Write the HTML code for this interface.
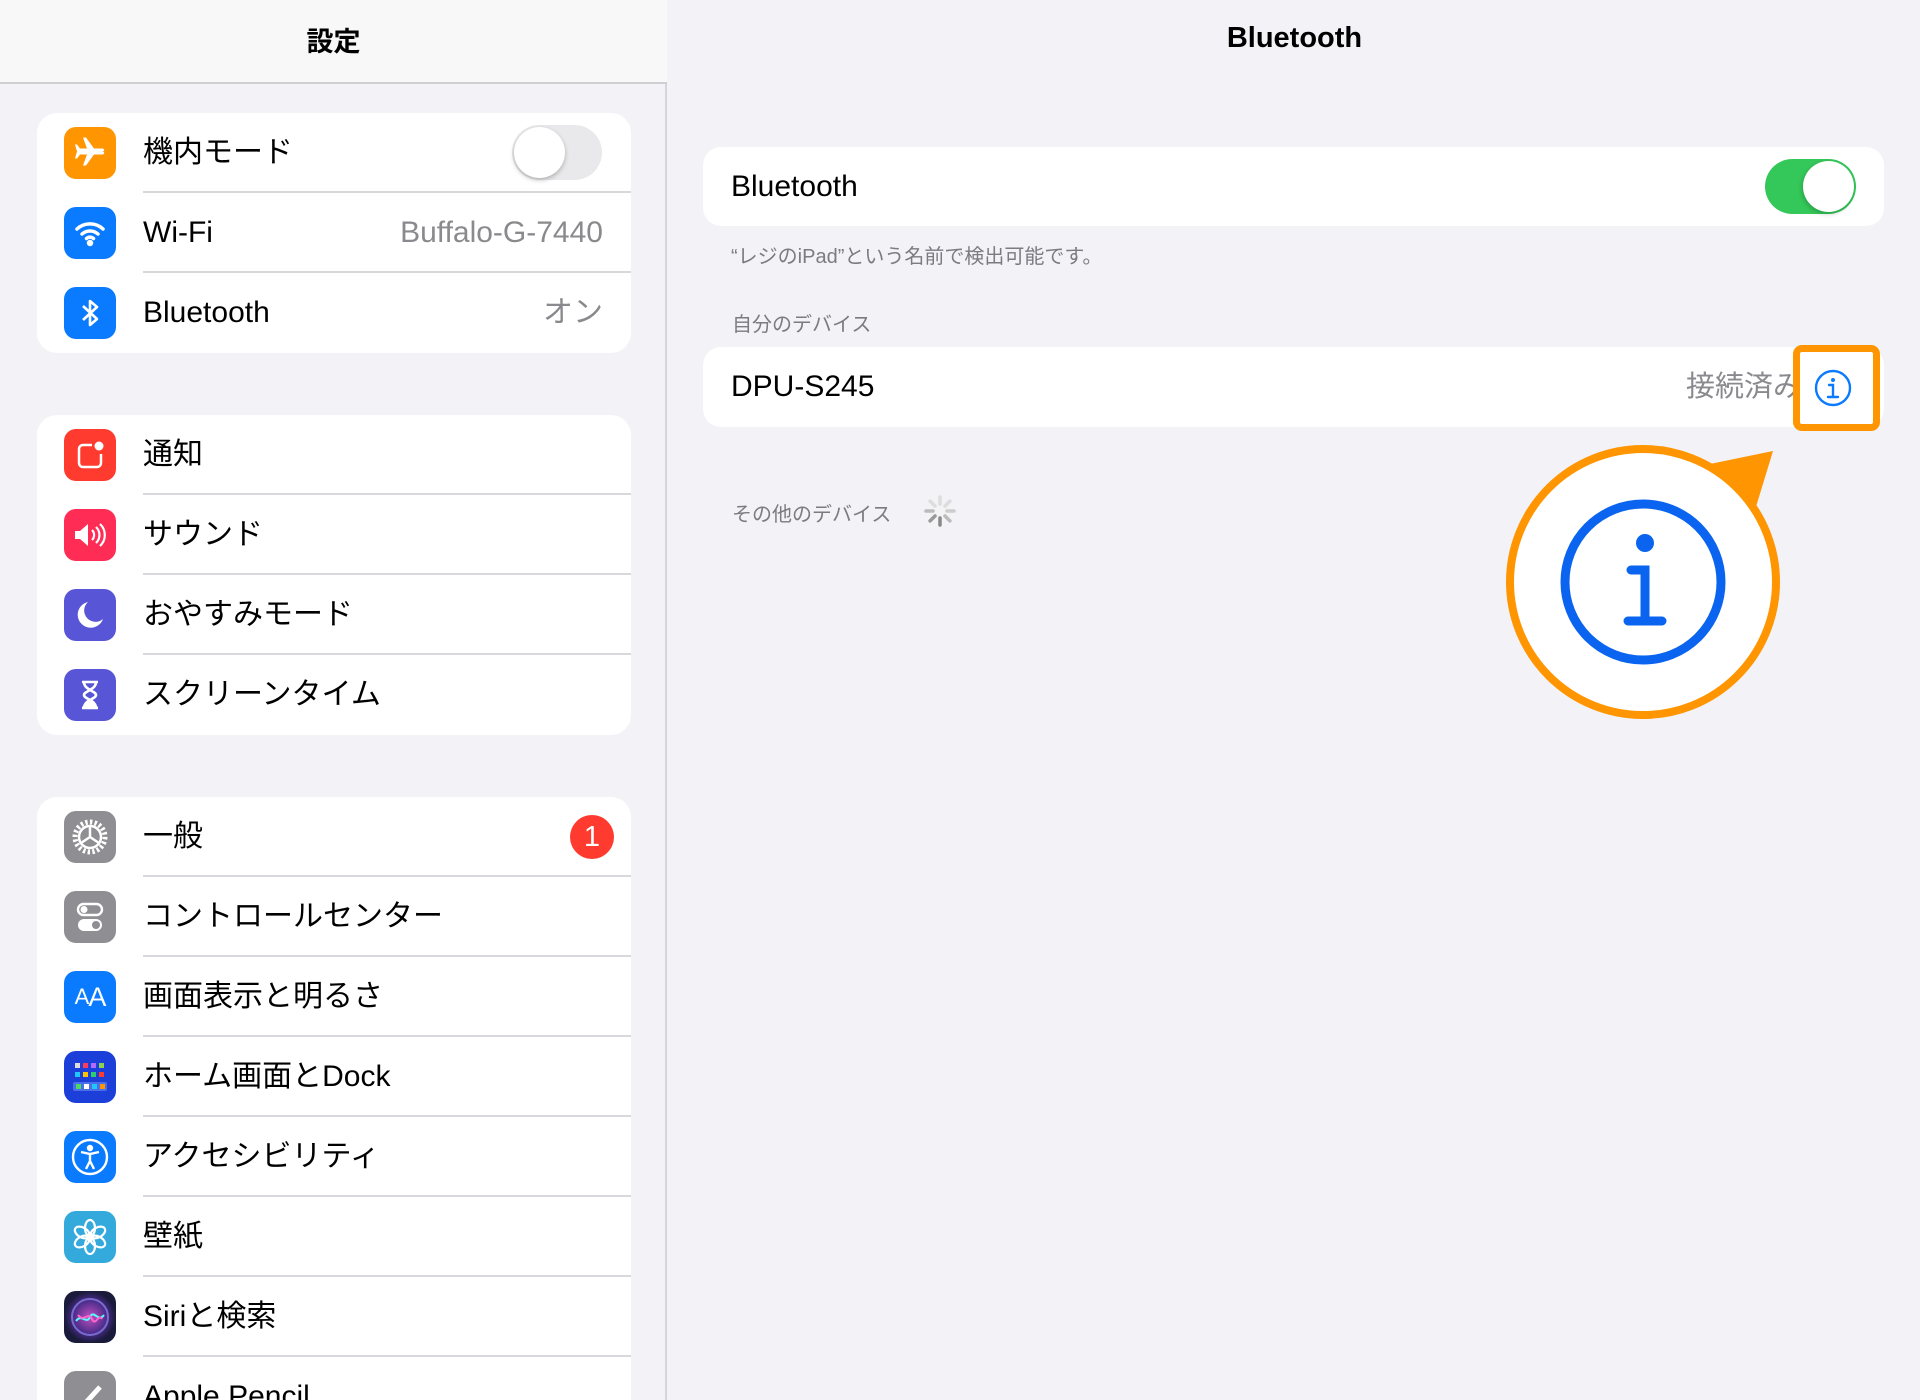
<!DOCTYPE html>
<html style="overflow:hidden;height:1400px"><head><meta charset="utf-8"><style>
*{margin:0;padding:0;box-sizing:border-box}
body{width:1920px;height:1400px;overflow:hidden;background:#f2f2f7;font-family:"Liberation Sans","Noto Sans CJK JP",sans-serif;position:relative;color:#000}
.a{position:absolute}
#side{left:0;top:0;width:667px;height:1400px;background:#f2f2f7;border-right:2px solid #d6d6da}
#shead{left:0;top:0;width:667px;height:84px;background:#f8f8f8;border-bottom:2px solid #cfcfd3}
.t{font-size:29px;white-space:nowrap}
.grp{position:absolute;left:37px;width:594px;background:#fff;border-radius:20px;overflow:hidden}
.row{position:relative;height:80px}
.row .ic{position:absolute;left:27px;top:14px;width:52px;height:52px;border-radius:12px;display:flex;align-items:center;justify-content:center;color:#fff}
.row .lb{position:absolute;left:106px;top:0;line-height:80px;font-size:30px;white-space:nowrap}
.row .sep{position:absolute;left:106px;right:0;bottom:0;height:2px;background:#d8d8dc}
.row .val{position:absolute;right:28px;top:0;line-height:80px;font-size:30px;color:#8a8a8e}
.card{position:absolute;left:703px;width:1181px;background:#fff;border-radius:18px}
.gray{color:#7b7b80}
</style></head><body>
<div id="side" class="a"></div>
<div id="shead" class="a"></div>
<div class="a t" style="left:0;width:667px;top:20px;text-align:center;font-weight:bold;font-size:27px">設定</div>

<div class="grp" style="top:113px">
 <div class="row"><div class="ic" style="background:#ff9500"><svg width="36" height="36" viewBox="0 0 36 36"><path d="M4 18h26c3 0 3-3 0-3H22L14 4h-3l4 11H8l-3-4H3l2 7-2 7h2l3-4h7l-4 11h3l8-11h8c3 0 3-3 0-3z" fill="#fff" transform="translate(0,-1.5)"/></svg></div><div class="lb">機内モード</div><div class="sep"></div>
  <div class="a" style="right:29px;top:12px;width:90px;height:55px;border-radius:28px;background:#e9e9eb"><div class="a" style="left:2px;top:2px;width:51px;height:51px;border-radius:50%;background:#fff;box-shadow:0 2px 5px rgba(0,0,0,.25)"></div></div></div>
 <div class="row"><div class="ic" style="background:#0a7bff"><svg width="36" height="36" viewBox="0 0 36 36" fill="none" stroke="#fff" stroke-width="3.5" stroke-linecap="round"><path d="M5 14a19 19 0 0 1 26 0M10 19a12 12 0 0 1 16 0M14.5 23.5a5 5 0 0 1 7 0"/><circle cx="18" cy="28" r="1.5" fill="#fff"/></svg></div><div class="lb">Wi-Fi</div><div class="val">Buffalo-G-7440</div><div class="sep"></div></div>
 <div class="row"><div class="ic" style="background:#0a7bff"><svg width="30" height="36" viewBox="0 0 30 36" fill="none" stroke="#fff" stroke-width="2.6" stroke-linejoin="round"><path d="M8 11l14 13-7 6V6l7 6L8 25"/></svg></div><div class="lb">Bluetooth</div><div class="val">オン</div></div>
</div>

<div class="grp" style="top:415px">
 <div class="row"><div class="ic" style="background:#ff3b30"><svg width="36" height="36" viewBox="0 0 36 36" fill="none" stroke="#fff" stroke-width="2.5"><path d="M20 8H11a4 4 0 0 0-4 4v14a4 4 0 0 0 4 4h14a4 4 0 0 0 4-4v-9"/><circle cx="27" cy="9" r="4.5" fill="#fff" stroke="none"/></svg></div><div class="lb">通知</div><div class="sep"></div></div>
 <div class="row"><div class="ic" style="background:#ff2d55"><svg width="38" height="36" viewBox="0 0 38 36"><path d="M4 14h5l8-7v22l-8-7H4z" fill="#fff"/><path d="M21 13a7 7 0 0 1 0 10M25 10a11 11 0 0 1 0 16M29 7a15 15 0 0 1 0 22" stroke="#fff" stroke-width="2.2" fill="none"/></svg></div><div class="lb">サウンド</div><div class="sep"></div></div>
 <div class="row"><div class="ic" style="background:#5856d6"><svg width="36" height="36" viewBox="0 0 36 36"><path d="M16 5a13 13 0 1 0 15 17A11 11 0 0 1 16 5z" fill="#fff"/></svg></div><div class="lb">おやすみモード</div><div class="sep"></div></div>
 <div class="row"><div class="ic" style="background:#5856d6"><svg width="36" height="36" viewBox="0 0 36 36" fill="none" stroke="#fff" stroke-width="2.6"><path d="M10 5h16M10 31h16M12 5c0 8 12 9 12 13s-12 5-12 13M24 5c0 8-12 9-12 13s12 5 12 13"/><path d="M13 29l5-5 5 5z" fill="#fff"/></svg></div><div class="lb">スクリーンタイム</div></div>
</div>

<div class="grp" style="top:797px;height:603px;border-bottom-left-radius:0;border-bottom-right-radius:0">
 <div class="row"><div class="ic" style="background:#8e8e93"><svg width="42" height="42" viewBox="0 0 42 42" fill="none" stroke="#fff"><circle cx="21" cy="21" r="15" stroke-width="5" stroke-dasharray="2.4 2.3"/><circle cx="21" cy="21" r="11" stroke-width="2.5"/><path d="M21 21V10M21 21l-9 6M21 21l9 6" stroke-width="2.5"/></svg></div><div class="lb">一般</div><div class="sep"></div>
  <div class="a" style="right:17px;top:18px;width:44px;height:44px;border-radius:50%;background:#ff3b30;color:#fff;font-size:29px;text-align:center;line-height:44px">1</div></div>
 <div class="row"><div class="ic" style="background:#8e8e93"><svg width="36" height="36" viewBox="0 0 36 36"><rect x="6" y="5" width="24" height="11" rx="5.5" fill="none" stroke="#fff" stroke-width="2.4"/><circle cx="12" cy="10.5" r="3.5" fill="#fff"/><rect x="6" y="20" width="24" height="12" rx="6" fill="#fff"/><circle cx="24" cy="26" r="4" fill="#8e8e93"/></svg></div><div class="lb">コントロールセンター</div><div class="sep"></div></div>
 <div class="row"><div class="ic" style="background:#0a7bff;font-size:27px;letter-spacing:-1px"><span style="font-size:22px">A</span>A</div><div class="lb">画面表示と明るさ</div><div class="sep"></div></div>
 <div class="row"><div class="ic" style="background:#1c3fd9"><svg width="40" height="40" viewBox="0 0 40 40"><g><rect x="5" y="6" width="5" height="5" fill="#ddd"/><rect x="13" y="6" width="5" height="5" fill="#ff3b5c"/><rect x="21" y="6" width="5" height="5" fill="#b36bff"/><rect x="29" y="6" width="5" height="5" fill="#8fd14f"/><rect x="5" y="15" width="5" height="5" fill="#1ec8ff"/><rect x="13" y="15" width="5" height="5" fill="#ffc300"/><rect x="21" y="15" width="5" height="5" fill="#2ecc71"/><rect x="29" y="15" width="5" height="5" fill="#ff3b30"/><rect x="3" y="25" width="34" height="9" rx="2" fill="#4a6fe8"/><rect x="6" y="27" width="5" height="5" fill="#4cd964"/><rect x="14" y="27" width="5" height="5" fill="#fff"/><rect x="22" y="27" width="5" height="5" fill="#1ec8ff"/><rect x="30" y="27" width="5" height="5" fill="#ff9500"/></g></svg></div><div class="lb">ホーム画面とDock</div><div class="sep"></div></div>
 <div class="row"><div class="ic" style="background:#0a7bff"><svg width="42" height="42" viewBox="0 0 42 42" fill="none" stroke="#fff" stroke-width="2.4"><circle cx="21" cy="21" r="17"/><circle cx="21" cy="12" r="2" fill="#fff"/><path d="M12 16l9 2 9-2M21 18v7l-4 8M21 25l4 8"/></svg></div><div class="lb">アクセシビリティ</div><div class="sep"></div></div>
 <div class="row"><div class="ic" style="background:#34aadc"><svg width="40" height="40" viewBox="0 0 40 40" fill="none" stroke="#fff" stroke-width="2.2"><g transform="translate(20 20)"><ellipse rx="5" ry="8" cy="-9"/><ellipse rx="5" ry="8" cy="-9" transform="rotate(60)"/><ellipse rx="5" ry="8" cy="-9" transform="rotate(120)"/><ellipse rx="5" ry="8" cy="-9" transform="rotate(180)"/><ellipse rx="5" ry="8" cy="-9" transform="rotate(240)"/><ellipse rx="5" ry="8" cy="-9" transform="rotate(300)"/><circle r="3" fill="#fff"/></g></svg></div><div class="lb">壁紙</div><div class="sep"></div></div>
 <div class="row"><div class="ic" style="background:radial-gradient(circle,#c04fc0 0,#4a2d8a 45%,#1a1a3a 70%)"><svg width="44" height="44" viewBox="0 0 44 44" fill="none"><circle cx="22" cy="22" r="18" stroke="#7a6bd0" stroke-width="2"/><path d="M8 26c6-8 10 4 14-4s8 6 14-2" stroke="#5ff" stroke-width="2"/><path d="M10 20c6 8 10-4 14 4s6-6 10 0" stroke="#f6c" stroke-width="2"/></svg></div><div class="lb">Siriと検索</div><div class="sep"></div></div>
 <div class="row"><div class="ic" style="background:#8e8e93"><svg width="36" height="36" viewBox="0 0 36 36"><path d="M8 30l20-22" stroke="#fff" stroke-width="5"/></svg></div><div class="lb">Apple Pencil</div></div>
</div>

<!-- right -->
<div class="a t" style="left:669px;width:1251px;top:22px;text-align:center;font-weight:bold;font-size:29px">Bluetooth</div>
<div class="card" style="top:147px;height:79px">
 <div class="a t" style="left:28px;top:0;line-height:79px;font-size:30px">Bluetooth</div>
 <div class="a" style="left:1062px;top:12px;width:91px;height:55px;border-radius:28px;background:#34c759"><div class="a" style="left:38px;top:2px;width:51px;height:51px;border-radius:50%;background:#fff;box-shadow:-1px 2px 5px rgba(0,0,0,.2)"></div></div>
</div>
<div class="a gray" style="left:731px;top:240px;font-size:20px;white-space:nowrap">“レジのiPad”という名前で検出可能です。</div>
<div class="a gray" style="left:732px;top:308px;font-size:20px;white-space:nowrap">自分のデバイス</div>
<div class="card" style="top:347px;height:80px">
 <div class="a t" style="left:28px;top:0;line-height:80px;font-size:30px">DPU-S245</div>
 <div class="a t" style="left:983px;top:0;line-height:80px;color:#8a8a8e">接続済み</div>
</div>
<div class="a" style="left:1793px;top:345px;width:87px;height:86px;border:7px solid #ff9500;border-radius:9px;background:#fff"></div>
<svg class="a" style="left:1813px;top:368px" width="40" height="40" viewBox="0 0 40 40" fill="none" stroke="#0a7bff"><circle cx="20" cy="20" r="17" stroke-width="2.4"/><circle cx="20" cy="12" r="2" fill="#0a7bff" stroke="none"/><path d="M16 17h4v12M15 29h10" stroke-width="2.4" stroke-linecap="round"/></svg>
<div class="a gray" style="left:732px;top:498px;font-size:20px;white-space:nowrap">その他のデバイス</div>
<svg class="a" style="left:922px;top:493px" width="36" height="36" viewBox="0 0 36 36" stroke-width="3.5" stroke-linecap="round"><g transform="translate(18 18)"><line y1="-7" y2="-14" stroke="#ddd"/><line y1="-7" y2="-14" stroke="#ddd" transform="rotate(45)"/><line y1="-7" y2="-14" stroke="#ccc" transform="rotate(90)"/><line y1="-7" y2="-14" stroke="#bbb" transform="rotate(135)"/><line y1="-7" y2="-14" stroke="#888" transform="rotate(180)"/><line y1="-7" y2="-14" stroke="#999" transform="rotate(225)"/><line y1="-7" y2="-14" stroke="#bbb" transform="rotate(270)"/><line y1="-7" y2="-14" stroke="#ddd" transform="rotate(315)"/></g></svg>

<svg class="a" style="left:1500px;top:440px" width="300" height="290" viewBox="1500 440 300 290">
 <path d="M1705 465L1773 451L1755 510Z" fill="#ff9500"/>
 <circle cx="1643" cy="582" r="133" fill="#fff" stroke="#ff9500" stroke-width="8"/>
 <circle cx="1643" cy="582" r="78" fill="none" stroke="#0a64f0" stroke-width="9"/>
 <circle cx="1645" cy="543" r="9" fill="#0a64f0"/>
 <path d="M1631 570h14v51M1628 621h34" fill="none" stroke="#0a64f0" stroke-width="9" stroke-linecap="round"/>
</svg>
</body></html>
